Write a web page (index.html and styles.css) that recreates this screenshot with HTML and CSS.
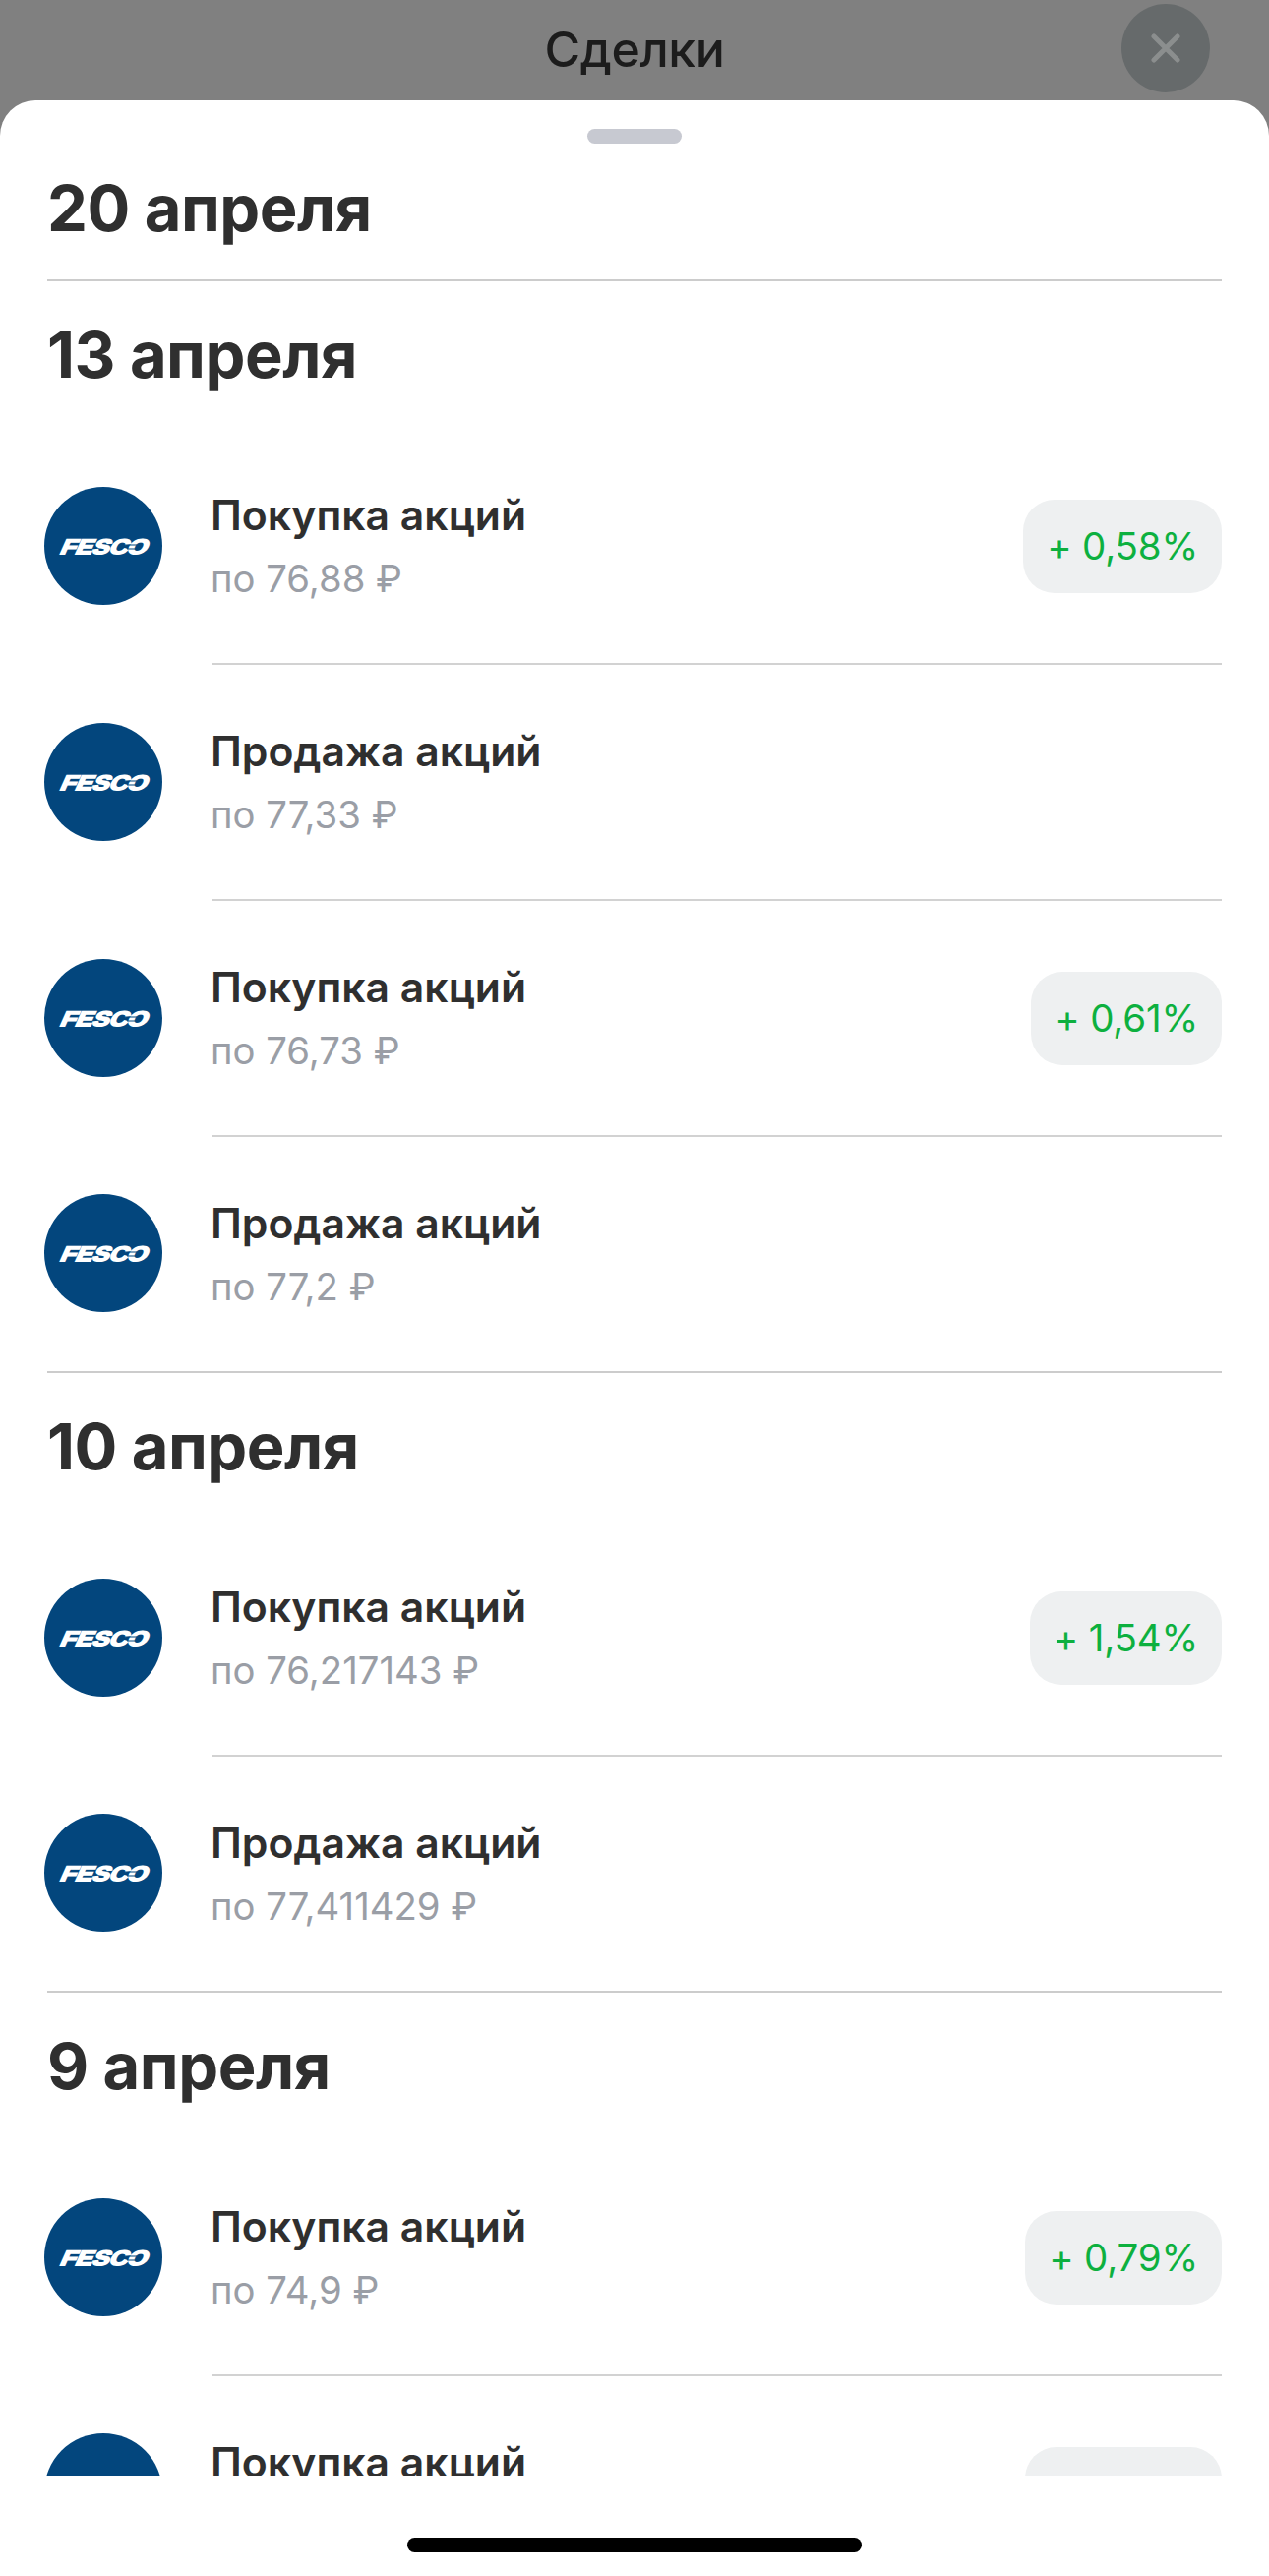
FILE: index.html
```html
<!DOCTYPE html>
<html lang="ru">

<head>
    <meta charset="UTF-8" />
    <title>Сделки</title>
    <link rel="stylesheet" href="styles.css">
</head>

<body>
    <svg class="defs" width="0" height="0">
        <symbol id="fesco" viewBox="0 0 120 120">
            <circle cx="60" cy="60" r="60" fill="#03467d" />
            <text class="logo-text" transform="translate(15 68) skewX(-24)" textLength="88" lengthAdjust="spacingAndGlyphs">FESCO</text>
            <path d="M82 59h12M84 63h11" stroke="#03467d" stroke-width="1.2" fill="none" />
        </symbol>
    </svg>

    <header class="topbar">
        <h1>Сделки</h1>
        <button class="close">
            <svg width="30" height="30" viewBox="0 0 30 30">
                <path d="M3 3l24 24M27 3L3 27" stroke="#8b8e8e" stroke-width="5" stroke-linecap="round" fill="none" />
            </svg>
        </button>
    </header>

    <main class="sheet">
        <div class="handle"></div>

        <div class="list">
            <section class="day">
                <h2 class="first-date">20 апреля</h2>
            </section>

            <section class="day">
                <h2>13 апреля</h2>
                <div class="row">
                    <svg class="avatar"><use href="#fesco" /></svg>
                    <div class="row-body">
                        <div class="info">
                            <p class="name">Покупка акций</p>
                            <p class="price">по 76,88 ₽</p>
                        </div>
                        <span class="pill">+ 0,58%</span>
                    </div>
                </div>
                <div class="row">
                    <svg class="avatar"><use href="#fesco" /></svg>
                    <div class="row-body">
                        <div class="info">
                            <p class="name">Продажа акций</p>
                            <p class="price">по 77,33 ₽</p>
                        </div>
                    </div>
                </div>
                <div class="row">
                    <svg class="avatar"><use href="#fesco" /></svg>
                    <div class="row-body">
                        <div class="info">
                            <p class="name">Покупка акций</p>
                            <p class="price">по 76,73 ₽</p>
                        </div>
                        <span class="pill">+ 0,61%</span>
                    </div>
                </div>
                <div class="row">
                    <svg class="avatar"><use href="#fesco" /></svg>
                    <div class="row-body">
                        <div class="info">
                            <p class="name">Продажа акций</p>
                            <p class="price">по 77,2 ₽</p>
                        </div>
                    </div>
                </div>
            </section>

            <section class="day">
                <h2>10 апреля</h2>
                <div class="row">
                    <svg class="avatar"><use href="#fesco" /></svg>
                    <div class="row-body">
                        <div class="info">
                            <p class="name">Покупка акций</p>
                            <p class="price">по 76,217143 ₽</p>
                        </div>
                        <span class="pill">+ 1,54%</span>
                    </div>
                </div>
                <div class="row">
                    <svg class="avatar"><use href="#fesco" /></svg>
                    <div class="row-body">
                        <div class="info">
                            <p class="name">Продажа акций</p>
                            <p class="price">по 77,411429 ₽</p>
                        </div>
                    </div>
                </div>
            </section>

            <section class="day">
                <h2>9 апреля</h2>
                <div class="row">
                    <svg class="avatar"><use href="#fesco" /></svg>
                    <div class="row-body">
                        <div class="info">
                            <p class="name">Покупка акций</p>
                            <p class="price">по 74,9 ₽</p>
                        </div>
                        <span class="pill">+ 0,79%</span>
                    </div>
                </div>
                <div class="row">
                    <svg class="avatar"><use href="#fesco" /></svg>
                    <div class="row-body">
                        <div class="info">
                            <p class="name">Покупка акций</p>
                            <p class="price">по 75,1 ₽</p>
                        </div>
                        <span class="pill">+ 0,79%</span>
                    </div>
                </div>
            </section>
        </div>

        <div class="home-area">
            <div class="home-bar"></div>
        </div>
    </main>
</body>

</html>
```

FILE: styles.css
```css
* {
    box-sizing: border-box;
    margin: 0;
    padding: 0;
    font-family: 'Inter', 'Noto Sans', sans-serif;
}

body {
    height: 100vh;
    overflow: hidden;
    display: flex;
    flex-direction: column;
    background: #808080;
}

.defs {
    position: absolute;
}

.topbar {
    height: 102px;
    flex-shrink: 0;
    display: flex;
    align-items: center;
    justify-content: center;
    position: relative;
}

.topbar h1 {
    font-size: 50px;
    font-weight: 500;
    color: #1c1c1c;
    letter-spacing: -0.4px;
    margin-top: -2px;
}

.close {
    position: absolute;
    top: 4px;
    right: 60px;
    width: 90px;
    height: 90px;
    border: none;
    border-radius: 50%;
    background: #666a6b;
    display: flex;
    align-items: center;
    justify-content: center;
}

.sheet {
    flex: 1;
    min-height: 0;
    display: flex;
    flex-direction: column;
    background: #fff;
    border-radius: 36px 36px 0 0;
    padding-top: 29px;
}

.handle {
    width: 96px;
    height: 15px;
    flex-shrink: 0;
    margin: 0 auto;
    border-radius: 8px;
    background: #c7c9d1;
}

.list {
    flex: 1;
    min-height: 0;
    overflow: hidden;
    padding: 0 48px;
}

.day {
    border-bottom: 2px solid #cccccc;
}

.day h2 {
    font-size: 65px;
    line-height: 80px;
    font-weight: 700;
    color: #2f2f2f;
    letter-spacing: -0.5px;
    padding: 35px 0;
}

.day h2.first-date {
    padding: 26px 0 32px;
}

.row {
    height: 240px;
    display: flex;
    align-items: center;
    margin-left: -3px;
}

.row:last-child {
    height: 238px;
}

.avatar {
    width: 120px;
    height: 120px;
    flex-shrink: 0;
    margin-top: -2px;
}

.logo-text {
    font-family: 'Liberation Sans', sans-serif;
    font-size: 21px;
    font-weight: 700;
    fill: #fff;
    stroke: #fff;
    stroke-width: 1.8px;
}

.row-body {
    flex: 1;
    height: 100%;
    margin-left: 50px;
    display: flex;
    align-items: center;
    justify-content: space-between;
    border-bottom: 2px solid #d2d2d2;
}

.row:last-child .row-body {
    border-bottom: none;
}

.info {
    margin-left: -1px;
}

.name {
    font-size: 42.7px;
    line-height: 50px;
    font-weight: 600;
    color: #2f2f2f;
}

.price {
    font-size: 38.3px;
    line-height: 46px;
    font-weight: 400;
    color: #9a9ea6;
    margin-top: 16px;
}

.pill {
    height: 95px;
    padding: 0 24px;
    display: flex;
    align-items: center;
    border-radius: 32px;
    background: #eef0f1;
    font-size: 38.5px;
    letter-spacing: -0.2px;
    color: #0db03f;
}

.home-area {
    height: 102px;
    flex-shrink: 0;
    padding-top: 63px;
}

.home-bar {
    width: 462px;
    height: 15px;
    margin: 0 auto;
    border-radius: 8px;
    background: #000;
}
```
